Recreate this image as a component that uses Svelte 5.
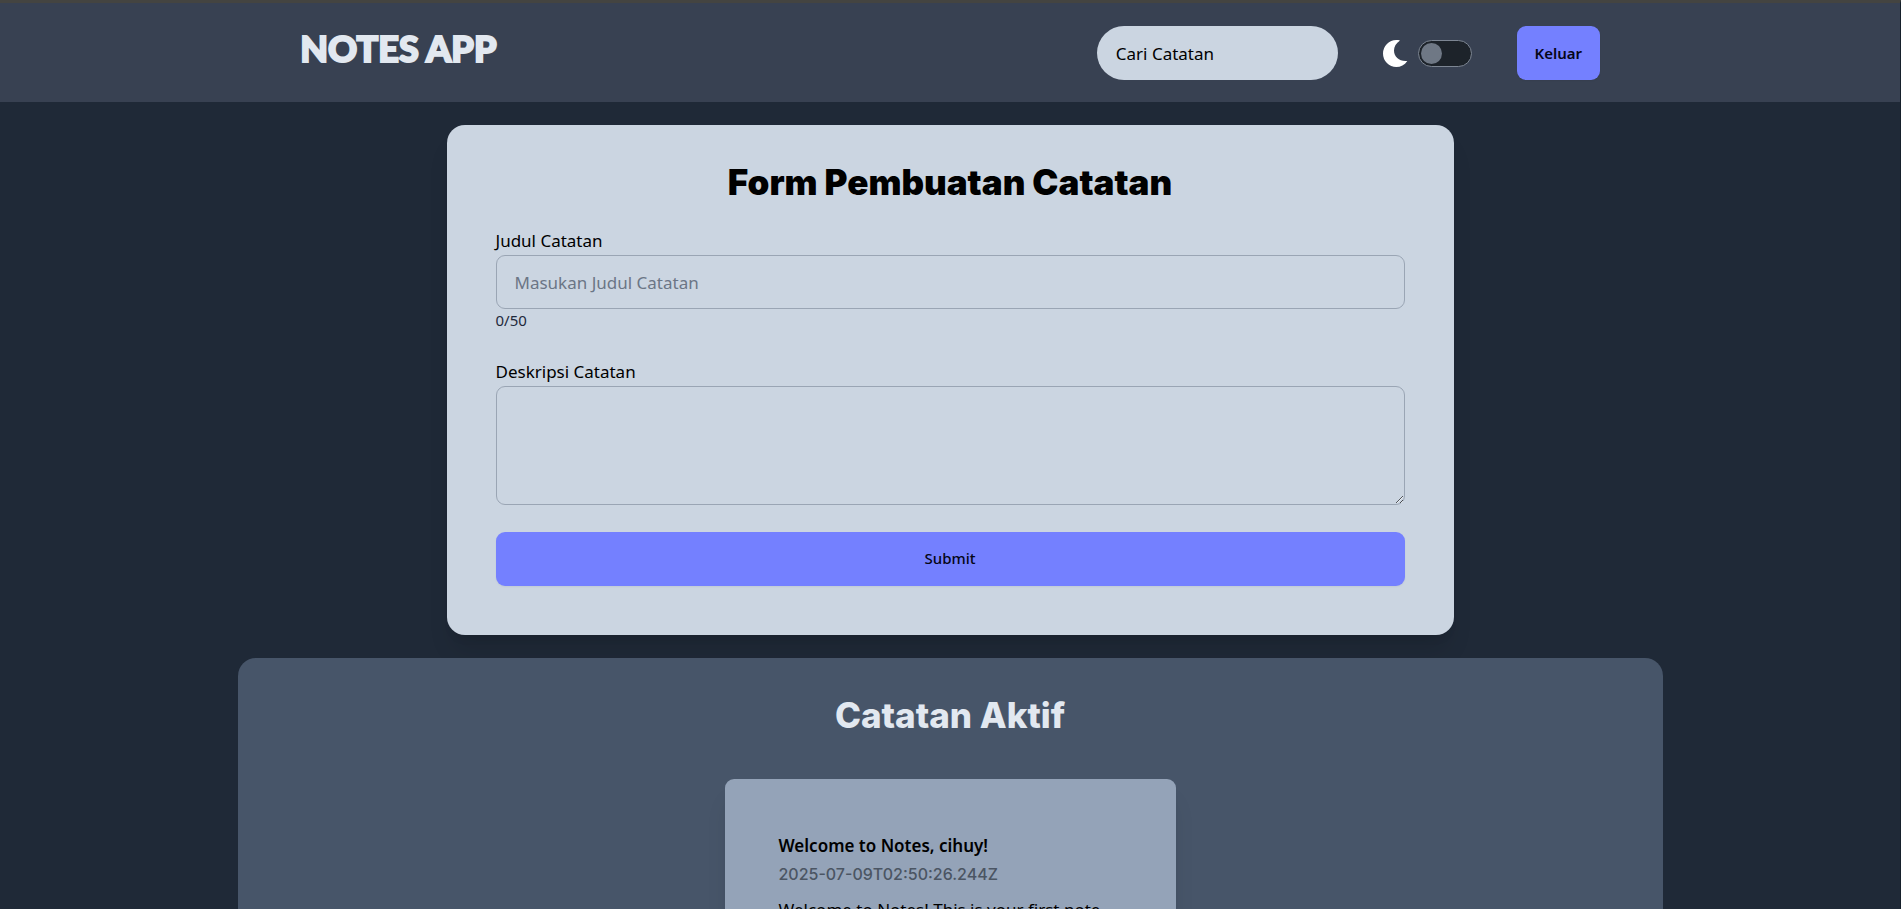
<script>
  let search = $state('');
  let dark = $state(false);
  let title = $state('');
  let body = $state('');

  const notes = [
    {
      title: 'Welcome to Notes, cihuy!',
      createdAt: '2025-07-09T02:50:26.244Z',
      body: 'Welcome to Notes! This is your first note.'
    }
  ];
</script>

<div class="page">
  <header>
    <div class="bar">
      <h1>NOTES APP</h1>
      <div class="tools">
        <input class="search" type="search" placeholder="Cari Catatan" aria-label="Cari Catatan" bind:value={search} />
        <label class="theme">
          <svg width="25" height="27" viewBox="0 0 25 27" aria-hidden="true">
            <path fill="#fff" d="M17 .4C13 3 11 6.600 11 10.600C11 17.200 16.800 21.800 24.300 20.900C21.600 24.900 17.700 27 13.300 27A13.300 13.500 0 0 1 13.300 0C14.600 0 15.900.1 17 .4Z" />
          </svg>
          <input class="toggle" type="checkbox" aria-label="Tema" bind:checked={dark} />
        </label>
        <button class="btn logout" type="button">Keluar</button>
      </div>
    </div>
  </header>

  <main>
    <form class="form" onsubmit={(e) => e.preventDefault()}>
      <h2>Form Pembuatan Catatan</h2>
      <label for="title">Judul Catatan</label>
      <input id="title" class="field" type="text" maxlength="50" placeholder="Masukan Judul Catatan" bind:value={title} />
      <p class="count">{title.length}/50</p>
      <label for="body">Deskripsi Catatan</label>
      <textarea id="body" class="field" bind:value={body}></textarea>
      <button class="btn submit" type="submit">Submit</button>
    </form>

    <section class="active">
      <h2>Catatan Aktif</h2>
      {#each notes as note}
        <article>
          <h3>{note.title}</h3>
          <time datetime={note.createdAt}>{note.createdAt}</time>
          <p>{note.body}</p>
        </article>
      {/each}
    </section>
  </main>
</div>

<style>
  :global(body) {
    background: #1f2937;
    scrollbar-width: none;
  }
  .page, .page * {
    box-sizing: border-box;
  }
  .page {
    border-top: 3px solid #444441;
    border-right: 1px solid #16202b;
    font-family: 'Noto Sans', sans-serif;
    font-size: 17px;
    line-height: 28px;
    color: #000;
  }
  h1, h2, h3, p {
    margin: 0;
  }
  input, textarea, button {
    font-family: inherit;
    color: #000;
  }
  header {
    background: #384152;
    padding: 23px 0 22px;
  }
  .bar {
    width: 68.4%;
    margin: 0 auto;
    display: flex;
    justify-content: space-between;
    align-items: flex-start;
  }
  h1 {
    font: 900 36px/44px Lato, sans-serif;
    color: #e2e8f0;
    -webkit-text-stroke: 2px #e2e8f0;
  }
  .tools {
    display: flex;
    align-items: center;
    gap: 45px;
  }
  .search {
    width: 241px;
    height: 54px;
    padding: 0 19px;
    border: 0;
    border-radius: 27px;
    background: #cbd5e1;
    font-size: 17px;
  }
  .search::placeholder {
    color: #000;
  }
  .theme {
    display: flex;
    align-items: center;
    gap: 10px;
  }
  .toggle {
    appearance: none;
    width: 54px;
    height: 27px;
    margin: 0;
    padding: 2px;
    border: 1px solid #7d8693;
    border-radius: 14px;
    background: #1d232a;
    display: flex;
    align-items: center;
  }
  .toggle::before {
    content: '';
    width: 21px;
    height: 21px;
    border-radius: 50%;
    background: #6f7885;
  }
  .toggle:checked {
    justify-content: flex-end;
  }
  .btn {
    height: 54px;
    border: 0;
    border-radius: 9px;
    background: #7480ff;
    color: #050617;
    font-size: 15px;
    box-shadow: 0 1px 2px rgb(0 0 0 / 5%);
  }
  .logout {
    width: 83px;
    padding: 0;
    font-weight: 600;
  }
  main {
    padding: 23px 0;
    display: flex;
    flex-direction: column;
    align-items: center;
    gap: 23px;
  }
  .form {
    width: 53%;
    padding: 37px 49px 49px;
    border-radius: 18px;
    background: #cbd5e1;
    box-shadow: 0 20px 25px -5px rgb(0 0 0 / 10%), 0 8px 10px -6px rgb(0 0 0 / 10%);
    display: flex;
    flex-direction: column;
  }
  h2 {
    font: 800 35px/40px Inter, sans-serif;
    text-align: center;
  }
  .form h2 {
    margin-bottom: 25px;
    font-weight: 900;
  }
  .field {
    width: 100%;
    height: 54px;
    padding: 0 18px;
    border: 1px solid #9aa5b4;
    border-radius: 9px;
    background: transparent;
    font-size: 17px;
  }
  .field::placeholder {
    color: #6b7686;
  }
  .count {
    margin-bottom: 27px;
    font-size: 15px;
    line-height: 22px;
    color: #1e293b;
  }
  textarea.field {
    height: 119px;
    padding: 9px 18px;
    resize: vertical;
  }
  .submit {
    margin-top: 27px;
    padding: 0 0 2px;
    font-weight: 500;
  }
  .active {
    width: 75%;
    padding: 37px 49px 49px;
    border-radius: 18px;
    background: #475569;
    display: flex;
    flex-direction: column;
    align-items: center;
    gap: 44px;
  }
  .active h2 {
    color: #e2e8f0;
  }
  article {
    width: 451px;
    max-width: 100%;
    padding: 53px 54px;
    border-radius: 9px;
    background: #94a3b8;
    box-shadow: 0 20px 25px -5px rgb(0 0 0 / 10%), 0 8px 10px -6px rgb(0 0 0 / 10%);
  }
  h3 {
    font-size: 17px;
    font-weight: 600;
    line-height: 28px;
  }
  time {
    display: block;
    font-family: Inter, sans-serif;
    font-size: 16px;
    font-weight: 500;
    color: #4b5563;
  }
  article p {
    margin-top: 8px;
  }
</style>
